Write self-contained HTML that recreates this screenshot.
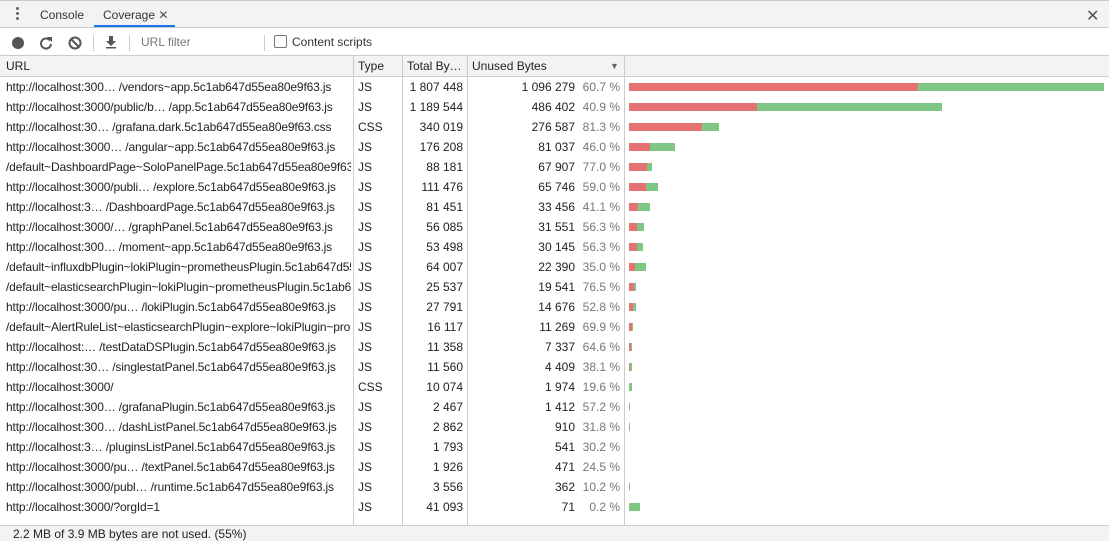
<!DOCTYPE html><html><head><style>
body{margin:0;width:1109px;height:541px;overflow:hidden;font-family:"Liberation Sans",sans-serif;font-size:12px;color:#222;background:#fff;position:relative}
.a{position:absolute}
.tabs{left:0;top:0;width:1109px;height:28px;background:#f3f3f3;border-top:1px solid #ccc;border-bottom:1px solid #ccc;box-sizing:border-box}
.tb{top:29px;height:27px;width:1109px;border-bottom:1px solid #ccc;box-sizing:border-box}
.hd{top:56px;height:21px;width:1109px;background:#f3f3f3;border-bottom:1px solid #ccc;box-sizing:border-box}
.v{top:56px;height:469px;width:1px;background:#ccc}
.row{position:absolute;left:0;width:1109px;height:20px;line-height:20px}
.row span{position:absolute;white-space:nowrap;overflow:hidden}
.u{left:6px;width:345px;letter-spacing:-0.15px}.t{left:358px}.tot{right:646px;text-align:right}.un{right:534px}.p{right:489px;color:#777}
.r{position:absolute;top:6px;height:8px;left:629px;background:#81c784}
.r i{display:block;height:8px;background:#e57373}
.st{top:525px;height:16px;width:1109px;background:#f3f3f3;border-top:1px solid #ccc;box-sizing:border-box;line-height:16px;padding-left:13px}
</style></head><body>
<div class="a tabs">
<div class="a" style="left:16px;top:6px;width:3px">
<div style="width:3px;height:3px;border-radius:2px;background:#666;margin-bottom:2px"></div><div style="width:3px;height:3px;border-radius:2px;background:#666;margin-bottom:2px"></div><div style="width:3px;height:3px;border-radius:2px;background:#666"></div></div>
<div class="a" style="left:40px;top:7px;color:#333">Console</div>
<div class="a" style="left:103px;top:7px;color:#333">Coverage <span style="color:#555">✕</span></div>
<div class="a" style="left:94px;top:24px;width:81px;height:2px;background:#1a73e8"></div>
<div class="a" style="left:1086px;top:5px;font-size:16px;color:#555">✕</div>
</div>
<div class="a tb">
<div class="a" style="left:12px;top:8px;width:12px;height:12px;border-radius:6px;background:#555"></div>
<svg class="a" style="left:39px;top:7px" width="14" height="14" viewBox="0 0 14 14"><path d="M11 4.5A5 5 0 1 0 12 8" fill="none" stroke="#555" stroke-width="2"/><path d="M8 1h5v5z" fill="#555"/></svg>
<svg class="a" style="left:68px;top:7px" width="14" height="14" viewBox="0 0 14 14"><circle cx="7" cy="7" r="5.5" fill="none" stroke="#555" stroke-width="2"/><path d="M3 3l8 8" stroke="#555" stroke-width="2"/></svg>
<div class="a" style="left:93px;top:6px;width:1px;height:16px;background:#ccc"></div>
<svg class="a" style="left:105px;top:6px" width="12" height="14" viewBox="0 0 12 14"><path d="M4 1h4v5h3L6 11 1 6h3z" fill="#555"/><rect x="1" y="12" width="10" height="1.5" fill="#555"/></svg>
<div class="a" style="left:129px;top:6px;width:1px;height:16px;background:#ccc"></div>
<div class="a" style="left:141px;top:6px;color:#777">URL filter</div>
<div class="a" style="left:264px;top:6px;width:1px;height:16px;background:#ccc"></div>
<div class="a" style="left:274px;top:6px;width:11px;height:11px;border:1px solid #777;border-radius:2px"></div>
<div class="a" style="left:292px;top:6px;color:#333">Content scripts</div>
</div>
<div class="a hd">
<div class="a" style="left:6px;top:3px">URL</div>
<div class="a" style="left:358px;top:3px">Type</div>
<div class="a" style="left:407px;top:3px">Total By…</div>
<div class="a" style="left:472px;top:3px">Unused Bytes</div>
<div class="a" style="left:610px;top:5px;font-size:9px;color:#666">▼</div>
</div>
<div class="a v" style="left:353px"></div><div class="a v" style="left:402px"></div><div class="a v" style="left:467px"></div><div class="a v" style="left:624px"></div>
<div class="a" style="top:77px;left:0;width:1109px">
<div class="row" style="top:0"><span class="u">http://localhost:300…  /vendors~app.5c1ab647d55ea80e9f63.js</span><span class="t">JS</span><span class="tot">1 807 448</span><span class="un">1 096 279</span><span class="p">60.7 %</span><div class="r" style="width:475px"><i style="width:289px"></i></div></div>
<div class="row" style="top:20px"><span class="u">http://localhost:3000/public/b… /app.5c1ab647d55ea80e9f63.js</span><span class="t">JS</span><span class="tot">1 189 544</span><span class="un">486 402</span><span class="p">40.9 %</span><div class="r" style="width:313px"><i style="width:128px"></i></div></div>
<div class="row" style="top:40px"><span class="u">http://localhost:30…  /grafana.dark.5c1ab647d55ea80e9f63.css</span><span class="t">CSS</span><span class="tot">340 019</span><span class="un">276 587</span><span class="p">81.3 %</span><div class="r" style="width:90px"><i style="width:73px"></i></div></div>
<div class="row" style="top:60px"><span class="u">http://localhost:3000…  /angular~app.5c1ab647d55ea80e9f63.js</span><span class="t">JS</span><span class="tot">176 208</span><span class="un">81 037</span><span class="p">46.0 %</span><div class="r" style="width:46px"><i style="width:21px"></i></div></div>
<div class="row" style="top:80px"><span class="u">/default~DashboardPage~SoloPanelPage.5c1ab647d55ea80e9f63.js</span><span class="t">JS</span><span class="tot">88 181</span><span class="un">67 907</span><span class="p">77.0 %</span><div class="r" style="width:23px"><i style="width:18px"></i></div></div>
<div class="row" style="top:100px"><span class="u">http://localhost:3000/publi… /explore.5c1ab647d55ea80e9f63.js</span><span class="t">JS</span><span class="tot">111 476</span><span class="un">65 746</span><span class="p">59.0 %</span><div class="r" style="width:29px"><i style="width:17px"></i></div></div>
<div class="row" style="top:120px"><span class="u">http://localhost:3…  /DashboardPage.5c1ab647d55ea80e9f63.js</span><span class="t">JS</span><span class="tot">81 451</span><span class="un">33 456</span><span class="p">41.1 %</span><div class="r" style="width:21px"><i style="width:9px"></i></div></div>
<div class="row" style="top:140px"><span class="u">http://localhost:3000/…  /graphPanel.5c1ab647d55ea80e9f63.js</span><span class="t">JS</span><span class="tot">56 085</span><span class="un">31 551</span><span class="p">56.3 %</span><div class="r" style="width:15px"><i style="width:8px"></i></div></div>
<div class="row" style="top:160px"><span class="u">http://localhost:300…  /moment~app.5c1ab647d55ea80e9f63.js</span><span class="t">JS</span><span class="tot">53 498</span><span class="un">30 145</span><span class="p">56.3 %</span><div class="r" style="width:14px"><i style="width:8px"></i></div></div>
<div class="row" style="top:180px"><span class="u">/default~influxdbPlugin~lokiPlugin~prometheusPlugin.5c1ab647d55</span><span class="t">JS</span><span class="tot">64 007</span><span class="un">22 390</span><span class="p">35.0 %</span><div class="r" style="width:17px"><i style="width:6px"></i></div></div>
<div class="row" style="top:200px"><span class="u">/default~elasticsearchPlugin~lokiPlugin~prometheusPlugin.5c1ab6</span><span class="t">JS</span><span class="tot">25 537</span><span class="un">19 541</span><span class="p">76.5 %</span><div class="r" style="width:7px"><i style="width:5px"></i></div></div>
<div class="row" style="top:220px"><span class="u">http://localhost:3000/pu… /lokiPlugin.5c1ab647d55ea80e9f63.js</span><span class="t">JS</span><span class="tot">27 791</span><span class="un">14 676</span><span class="p">52.8 %</span><div class="r" style="width:7px"><i style="width:4px"></i></div></div>
<div class="row" style="top:240px"><span class="u">/default~AlertRuleList~elasticsearchPlugin~explore~lokiPlugin~pro</span><span class="t">JS</span><span class="tot">16 117</span><span class="un">11 269</span><span class="p">69.9 %</span><div class="r" style="width:4px"><i style="width:3px"></i></div></div>
<div class="row" style="top:260px"><span class="u">http://localhost:… /testDataDSPlugin.5c1ab647d55ea80e9f63.js</span><span class="t">JS</span><span class="tot">11 358</span><span class="un">7 337</span><span class="p">64.6 %</span><div class="r" style="width:3px"><i style="width:2px"></i></div></div>
<div class="row" style="top:280px"><span class="u">http://localhost:30… /singlestatPanel.5c1ab647d55ea80e9f63.js</span><span class="t">JS</span><span class="tot">11 560</span><span class="un">4 409</span><span class="p">38.1 %</span><div class="r" style="width:3px"><i style="width:1px"></i></div></div>
<div class="row" style="top:300px"><span class="u">http://localhost:3000/</span><span class="t">CSS</span><span class="tot">10 074</span><span class="un">1 974</span><span class="p">19.6 %</span><div class="r" style="width:3px"><i style="width:0"></i></div></div>
<div class="row" style="top:320px"><span class="u">http://localhost:300… /grafanaPlugin.5c1ab647d55ea80e9f63.js</span><span class="t">JS</span><span class="tot">2 467</span><span class="un">1 412</span><span class="p">57.2 %</span><div class="r" style="width:1px;background:#aaa"></div></div>
<div class="row" style="top:340px"><span class="u">http://localhost:300… /dashListPanel.5c1ab647d55ea80e9f63.js</span><span class="t">JS</span><span class="tot">2 862</span><span class="un">910</span><span class="p">31.8 %</span><div class="r" style="width:1px;background:#aaa"></div></div>
<div class="row" style="top:360px"><span class="u">http://localhost:3… /pluginsListPanel.5c1ab647d55ea80e9f63.js</span><span class="t">JS</span><span class="tot">1 793</span><span class="un">541</span><span class="p">30.2 %</span></div>
<div class="row" style="top:380px"><span class="u">http://localhost:3000/pu… /textPanel.5c1ab647d55ea80e9f63.js</span><span class="t">JS</span><span class="tot">1 926</span><span class="un">471</span><span class="p">24.5 %</span></div>
<div class="row" style="top:400px"><span class="u">http://localhost:3000/publ… /runtime.5c1ab647d55ea80e9f63.js</span><span class="t">JS</span><span class="tot">3 556</span><span class="un">362</span><span class="p">10.2 %</span><div class="r" style="width:1px;background:#aaa"></div></div>
<div class="row" style="top:420px"><span class="u">http://localhost:3000/?orgId=1</span><span class="t">JS</span><span class="tot">41 093</span><span class="un">71</span><span class="p">0.2 %</span><div class="r" style="width:11px"></div></div>
</div>
<div class="a st">2.2 MB of 3.9 MB bytes are not used. (55%)</div>
</body></html>
